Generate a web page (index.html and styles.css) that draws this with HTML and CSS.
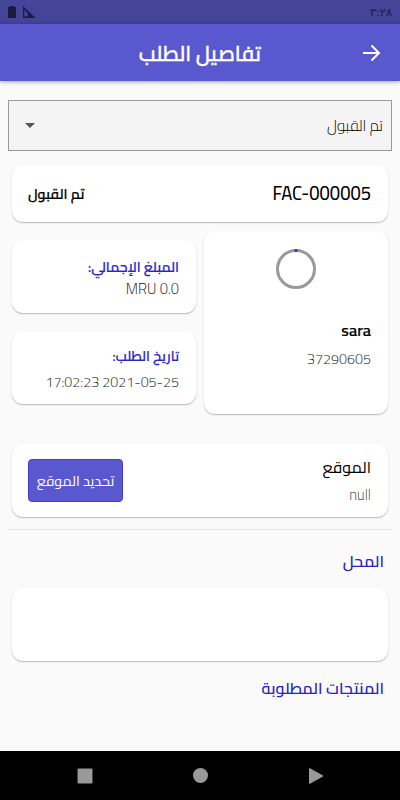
FILE: index.html
```html
<!DOCTYPE html>
<html lang="ar" dir="rtl">
<head>
<meta charset="utf-8">
<title>تفاصيل الطلب</title>
<link rel="stylesheet" href="styles.css">
</head>
<body>
<div class="status">
  <span class="clock">٣:٢٨</span>
  <svg class="status-icons" width="30" height="14" viewBox="0 0 30 14"><path d="M1 2h2V1h4v1h2v11H1z" fill="#1b1b41"/><path d="M16 1v12h12.500z" fill="#1b1b41"/><path d="M17.300 4.500v7h3.400V8z" fill="#444498"/></svg>
</div>
<header class="appbar">
  <svg class="back" width="18" height="18" viewBox="0 0 18 18"><path d="M0 9h16M8.500 1.500 16 9l-7.500 7.500" fill="none" stroke="#fff" stroke-width="2"/></svg>
  <h1 class="title">تفاصيل الطلب</h1>
</header>
<main>
  <div class="select"><span class="select-text">تم القبول</span><i class="caret"></i></div>
  <section class="card order"><span class="order-no">FAC-000005</span><b class="order-state">تم القبول</b></section>
  <div class="grid">
    <section class="card person">
      <svg class="ring" width="40" height="40" viewBox="0 0 40 40"><circle cx="20" cy="20" r="18.500" fill="none" stroke="#999" stroke-width="3"/><path d="M18.500 1.500h3" stroke="#423bd0" stroke-width="3"/></svg>
      <span class="name">sara</span>
      <span class="phone">37290605</span>
    </section>
    <div class="column">
      <section class="card info"><b class="label total">المبلغ الإجمالي:</b><span class="value amount">0.0 MRU</span></section>
      <section class="card info info-date"><b class="label date-label">تاريخ الطلب:</b><span class="value date">2021-05-25 17:02:23</span></section>
    </div>
  </div>
  <section class="card place">
    <div class="place-text"><span class="place-title">الموقع</span><span class="place-value">null</span></div>
    <button class="button"><span class="button-text">تحديد الموقع</span></button>
  </section>
  <hr>
  <h2 class="shop">المحل</h2>
  <section class="card empty"></section>
  <h2 class="products">المنتجات المطلوبة</h2>
</main>
<nav class="nav">
  <svg width="16" height="16"><path d="M1 1h14v14H1z" fill="#999" stroke="#999" stroke-linejoin="round"/></svg>
  <svg width="16" height="16"><circle cx="7.500" cy="7.500" r="7.500" fill="#999"/></svg>
  <svg width="16" height="18"><path d="M1.500 1.500v15L15 9z" fill="#999" stroke="#999" stroke-linejoin="round"/></svg>
</nav>
</body>
</html>
```
FILE: styles.css
```css
* { box-sizing: border-box; }
body { margin: 0; width: 400px; height: 800px; overflow: hidden; display: flex; flex-direction: column; background: #fafafa; font-family: "Cairo", "Titillium Web", "Open Sans", "DejaVu Sans", sans-serif; color: #000; }
h1, h2 { margin: 0; }
span, b, h1, h2 { display: block; white-space: nowrap; }
.status { height: 24px; flex: none; background: #444498; display: flex; justify-content: space-between; align-items: center; padding: 0 8px 0 7px; }
.clock { font-family: "DejaVu Sans", sans-serif; font-size: 11.300px; color: #1b1b41; }
.appbar { height: 57px; flex: none; background: #5a58ce; display: flex; align-items: center; padding-right: 19px; box-shadow: 0 1px 4px rgba(0,0,0,.35); }
.title { margin-right: 102px; margin-top: 1px; font-size: 21px; color: #fff; font-weight: 600; -webkit-text-stroke: .3px #fff; }
main { height: 670px; padding: 19px 8px 0; }
.select { height: 51px; border: 1px solid #999; background: #f4f4f4; display: flex; justify-content: space-between; align-items: center; padding: 0 8px 0 15.500px; font-size: 15.400px; font-weight: 300; color: #000; }
.caret { border: 5px solid transparent; border-top-color: #555; border-bottom: 0; }
.card { background: #fff; border-radius: 11px; margin: 0 4px; box-shadow: 0 1px 1.500px rgba(0,0,0,.27); }
.order { height: 57px; margin-top: 14px; display: flex; justify-content: space-between; align-items: center; padding: 0 17px 0 16px; }
.order-no { font-size: 18.400px; font-weight: 500; }
.order-state { font-size: 14.200px; font-weight: 600; -webkit-text-stroke: .2px #000; }
.grid { display: flex; gap: 8px; margin: 9px 4px 0; }
.person { width: 184px; height: 183px; margin: 0; padding: 18px 17px 0; display: flex; flex-direction: column; }
.ring { align-self: center; }
.name { margin-top: 29px; line-height: 24px; font-size: 16.200px; font-weight: 600; -webkit-text-stroke: .2px #000; }
.phone { margin-top: 5px; line-height: 24px; font-size: 14.300px; font-weight: 300; color: #222; }
.column { width: 184px; padding-top: 9px; display: flex; flex-direction: column; gap: 18px; }
.info { height: 73px; margin: 0; padding: 15px 17px 0; }
.info-date { padding-top: 13px; }
.label { color: #2925c5; font-size: 14px; line-height: 24px; font-weight: 600; -webkit-text-stroke: .2px #2925c5; }
.date-label { font-size: 13.800px; }
.value { color: #222; font-size: 14.700px; line-height: 20px; font-weight: 300; }
.date { margin-top: 4px; font-size: 14.250px; }
.place { height: 73px; margin-top: 30px; padding: 0 17px 0 16px; display: flex; justify-content: space-between; align-items: center; }
.place-title { font-size: 16px; line-height: 28px; }
.place-value { font-size: 14.700px; line-height: 28px; font-weight: 300; color: #444; }
.button { width: 95px; height: 43px; padding: 0; border: 1px solid #423bd0; border-radius: 4px; background: #5a58ce; color: #fff; font: inherit; font-size: 14.200px; display: flex; align-items: center; justify-content: center; }
hr { height: 1px; margin: 12px 0 0; border: 0; background: #e5e5e5; }
h2 { color: #2925c5; font-size: 16.100px; font-weight: 600; line-height: 28px; margin-right: 8px; }
.shop { margin-top: 17px; }
.empty { height: 73px; margin-top: 13px; }
.products { margin-top: 13px; }
.nav { height: 49px; flex: none; background: #000; display: flex; direction: ltr; align-items: center; justify-content: space-between; padding: 0 76px 0 77px; }
```
